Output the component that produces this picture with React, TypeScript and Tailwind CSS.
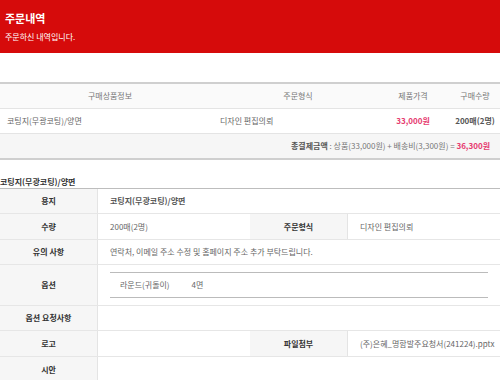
import React from 'react';

const FONT = { fontFamily: '"Noto Sans CJK KR", "Noto Sans", sans-serif' };

const labelCls = 'w-[98px] shrink-0 flex items-center justify-center bg-[#f6f6f6] border-r border-[#e4e4e4] font-bold text-[#333] text-[8px]';
const valueCls = 'flex-1 flex items-center px-3 text-[#666] text-[8px] whitespace-nowrap';

function Row({ label, children, h = 'h-[26px]' }: { label: string; children?: React.ReactNode; h?: string }) {
  return (
    <div className={`flex ${h} border-b border-[#e6e6e6]`}>
      <div className={labelCls}>{label}</div>
      <div className={valueCls}>{children}</div>
    </div>
  );
}

function SplitRow({ l1, v1, l2, v2 }: { l1: string; v1?: React.ReactNode; l2: string; v2?: React.ReactNode }) {
  return (
    <div className="flex h-[26px] border-b border-[#e6e6e6]">
      <div className={labelCls}>{l1}</div>
      <div className="w-[152px] shrink-0 flex items-center px-3 text-[#666] text-[8px]">{v1}</div>
      <div className={labelCls}>{l2}</div>
      <div className={valueCls}>{v2}</div>
    </div>
  );
}

export default function App() {
  return (
    <div className="w-[500px] h-[380px] overflow-hidden bg-white" style={FONT}>
      <div className="h-[53px] bg-[#d60b0b] px-[5px] pt-[9px]">
        <div className="text-white font-bold text-[11px] leading-[18px]">주문내역</div>
        <div className="text-white text-[8px] leading-[12px] mt-[4px]">주문하신 내역입니다.</div>
      </div>

      <div className="mt-[29px] border-t-2 border-b-2 border-[#cfcfcf]">
        <div className="flex h-[25px] items-center bg-[#fafafa] border-b border-[#e4e4e4] text-[#777] text-[8px]">
          <div className="w-[220px] text-center">구매상품정보</div>
          <div className="w-[156px] text-center">주문형식</div>
          <div className="w-[74px] text-center">제품가격</div>
          <div className="flex-1 text-center">구매수량</div>
        </div>
        <div className="flex h-[25px] items-center border-b border-[#e4e4e4] text-[#666] text-[8px]">
          <div className="w-[220px] pl-[7px]">코팅지(무광코팅)/양면</div>
          <div className="w-[156px]">디자인 편집의뢰</div>
          <div className="w-[74px] text-center text-[#e63b6f] font-bold">33,000원</div>
          <div className="flex-1 text-center text-[#555] font-bold">200매(2명)</div>
        </div>
        <div className="flex h-[24px] items-center justify-end pr-[10px] bg-[#f6f6f6] text-[8px] text-[#777]">
          <span className="font-bold text-[#555]">총결제금액</span>
          <span>&nbsp;: 상품(33,000원) + 배송비(3,300원) = </span>
          <span className="text-[#e63b6f] font-bold">&nbsp;36,300원</span>
        </div>
      </div>

      <div className="mt-[16px] text-[8px] font-bold text-[#333] leading-[12px]">코팅지(무광코팅)/양면</div>
      <div className="mt-[0px] border-t border-[#bdbdbd]">
        <Row label="용지" h="h-[25px]"><span className="font-bold text-[#555]">코팅지(무광코팅)/양면</span></Row>
        <SplitRow l1="수량" v1="200매(2명)" l2="주문형식" v2="디자인 편집의뢰" />
        <Row label="유의 사항" h="h-[25px]">연락처, 이메일 주소 수정 및 홈페이지 주소 추가 부탁드립니다.</Row>
        <Row label="옵션" h="h-[41px]">
          <div className="w-full border-t border-b border-[#bbbbbb] h-[26px] flex items-center pl-[10px] gap-[22px] mr-[-9px]">
            <span>라운드(귀돌이)</span>
            <span>4면</span>
          </div>
        </Row>
        <Row label="옵션 요청사항" h="h-[25px]" />
        <SplitRow l1="로고" l2="파일첨부" v2="(주)은혜_명함발주요청서(241224).pptx" />
        <Row label="시안" />
      </div>
    </div>
  );
}
